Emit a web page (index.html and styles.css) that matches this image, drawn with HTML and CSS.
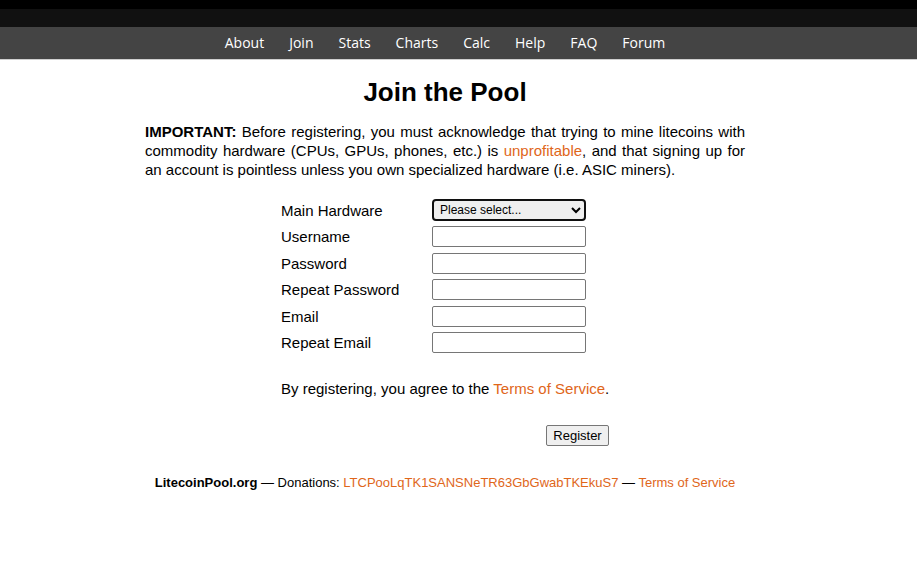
FILE: index.html
```html
<!DOCTYPE html>
<html lang="en">
<head>
<meta charset="utf-8">
<title>Join the Pool - LitecoinPool.org</title>
<link rel="stylesheet" href="styles.css">
</head>
<body>
<header class="topbar">
  <div class="strip-black"></div>
  <div class="strip-dark"></div>
  <nav class="nav">
    <div class="nav-inner">
      <a href="#">About</a>
      <a href="#">Join</a>
      <a href="#">Stats</a>
      <a href="#">Charts</a>
      <a href="#">Calc</a>
      <a href="#">Help</a>
      <a href="#">FAQ</a>
      <a href="#">Forum</a>
    </div>
  </nav>
</header>
<main class="page">
  <h1 class="title">Join the Pool</h1>
  <p class="notice"><b>IMPORTANT:</b> Before registering, you must acknowledge that trying to mine litecoins with commodity hardware (CPUs, GPUs, phones, etc.) is <a href="#" class="link">unprofitable</a>, and that signing up for an account is pointless unless you own specialized hardware (i.e. ASIC miners).</p>
  <form class="join-form">
    <div class="rows">
      <label class="lbl">Main Hardware</label>
      <div class="cell"><select class="sel"><option>Please select...</option></select></div>
      <label class="lbl">Username</label>
      <div class="cell"><input class="inp" type="text"></div>
      <label class="lbl">Password</label>
      <div class="cell"><input class="inp" type="password"></div>
      <label class="lbl">Repeat Password</label>
      <div class="cell"><input class="inp" type="password"></div>
      <label class="lbl">Email</label>
      <div class="cell"><input class="inp" type="text"></div>
      <label class="lbl">Repeat Email</label>
      <div class="cell"><input class="inp" type="text"></div>
    </div>
    <p class="agree">By registering, you agree to the <a href="#" class="link">Terms of Service</a>.</p>
    <div class="actions"><button type="button" class="btn">Register</button></div>
  </form>
  <footer class="footer"><b>LitecoinPool.org</b> — Donations: <a href="#" class="link">LTCPooLqTK1SANSNeTR63GbGwabTKEkuS7</a> — <a href="#" class="link">Terms of Service</a></footer>
</main>
</body>
</html>
```
FILE: styles.css
```css
html, body {
  margin: 0;
  padding: 0;
  background: #fff;
}
body {
  font-family: "Liberation Sans", Arial, sans-serif;
  color: #000;
}
.topbar {
  border-bottom: 1px solid #cfcfcf;
}
.strip-black {
  height: 9px;
  background: #000;
}
.strip-dark {
  height: 18px;
  background: #111;
}
.nav {
  height: 32px;
  background: #444;
}
.nav-inner {
  width: 890px;
  display: flex;
  justify-content: center;
  gap: 25px;
}
.nav a {
  font-family: "Open Sans", sans-serif;
  font-size: 14px;
  line-height: 32px;
  color: #fff;
  text-decoration: none;
}
.page {
  width: 890px;
}
.title {
  font-size: 26px;
  line-height: 30px;
  font-weight: bold;
  text-align: center;
  margin: 17px 0 15px;
}
.notice {
  width: 600px;
  margin: 0 auto;
  font-size: 15px;
  line-height: 19px;
  text-align: justify;
}
.link {
  color: #e0661a;
  text-decoration: none;
}
.join-form {
  width: 328px;
  margin: 18px auto 0;
}
.rows {
  display: grid;
  grid-template-columns: 151px 1fr;
  grid-auto-rows: 26.5px;
  align-items: center;
}
.lbl {
  font-size: 15px;
  line-height: 19px;
}
.cell {
  display: flex;
  align-items: center;
}
.sel {
  width: 154px;
  height: 22px;
  box-sizing: border-box;
  border: 2px solid #101010;
  border-radius: 4px;
  background: #efefef;
  font-family: "Liberation Sans", Arial, sans-serif;
  font-size: 12px;
  color: #000;
  padding: 0 2px;
}
.inp {
  width: 154px;
  height: 21px;
  box-sizing: border-box;
  border: 1px solid #767676;
  border-radius: 2px;
  margin: 0;
  padding: 1px 2px;
  background: #fff;
}
.agree {
  margin: 23px 0 0;
  font-size: 15px;
  line-height: 19px;
  white-space: nowrap;
}
.actions {
  display: flex;
  justify-content: flex-end;
  margin-top: 27px;
}
.btn {
  width: 63px;
  height: 21px;
  box-sizing: border-box;
  font-family: "Liberation Sans", Arial, sans-serif;
  font-size: 13px;
  color: #000;
  background: #efefef;
  border: 1px solid #767676;
  border-radius: 2px;
  padding: 0;
}
.footer {
  margin-top: 28px;
  text-align: center;
  font-size: 13px;
  line-height: 18px;
}
```
